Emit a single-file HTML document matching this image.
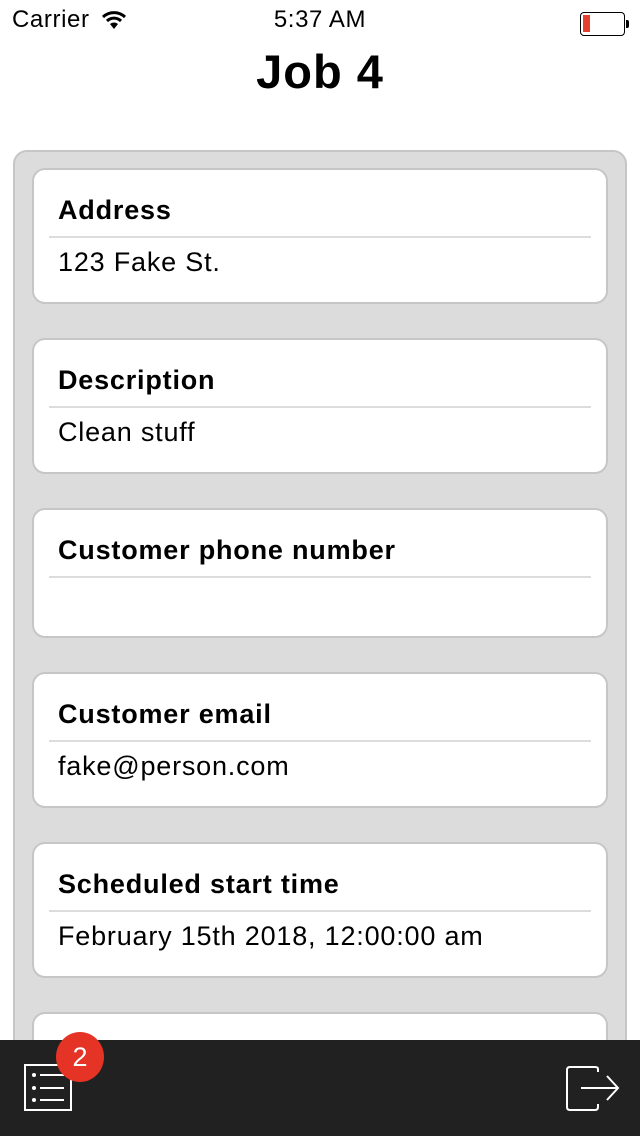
<!DOCTYPE html>
<html><head><meta charset="utf-8"><style>
*{margin:0;padding:0;box-sizing:border-box}
html,body{width:640px;height:1136px;overflow:hidden}
body{background:#fff;font-family:"Liberation Sans",sans-serif;position:relative;color:#000}
.sb{position:absolute;top:6px;font-size:24px;letter-spacing:0.6px}
.title{position:absolute;top:44px;width:100%;text-align:center;font-size:47px;font-weight:bold;letter-spacing:1px}
.wrap{position:absolute;left:13px;top:150px;width:614px;height:1000px;background:#dcdcdc;border:2px solid #c6c6c6;border-radius:14px}
.card{position:absolute;left:32px;width:576px;background:#fff;border:2px solid #c6c6c6;border-radius:13px}
.card .l{position:absolute;left:24px;top:25px;font-size:27px;font-weight:bold;letter-spacing:0.8px}
.card .sep{position:absolute;left:15px;right:15px;top:66px;height:2px;background:#dcdcdc}
.card .v{position:absolute;left:24px;top:77px;font-size:27px;letter-spacing:0.8px}
.tab{position:absolute;left:0;top:1040px;width:640px;height:96px;background:#212121}
</style></head><body>
<div class="sb" style="left:12px">Carrier</div>
<svg style="position:absolute;left:101px;top:10px" width="26" height="20" viewBox="0 0 26 20"><path d="M2 7 A16 16 0 0 1 24 7" stroke="#000" stroke-width="3" fill="none"/><path d="M6 11 A10 10 0 0 1 20 11" stroke="#000" stroke-width="3" fill="none"/><path d="M13 19 L9 14 A6 6 0 0 1 17 14 Z" fill="#000"/></svg>
<div class="sb" style="left:0;width:640px;text-align:center">5:37 AM</div>
<div style="position:absolute;left:580px;top:12px;width:45px;height:24px;border:1.5px solid #000;border-radius:4px"><div style="position:absolute;left:2px;top:2px;width:7px;height:17px;background:#e8402f"></div></div>
<div style="position:absolute;left:626px;top:20px;width:3px;height:8px;background:#000;border-radius:0 2px 2px 0"></div>
<div class="title">Job 4</div>
<div class="wrap"></div>
<div class="card" style="top:168px;height:136px"><div class="l">Address</div><div class="sep"></div><div class="v">123 Fake St.</div></div>
<div class="card" style="top:338px;height:136px"><div class="l">Description</div><div class="sep"></div><div class="v">Clean stuff</div></div>
<div class="card" style="top:508px;height:130px"><div class="l">Customer phone number</div><div class="sep"></div></div>
<div class="card" style="top:672px;height:136px"><div class="l">Customer email</div><div class="sep"></div><div class="v">fake@person.com</div></div>
<div class="card" style="top:842px;height:136px"><div class="l">Scheduled start time</div><div class="sep"></div><div class="v">February 15th 2018, 12:00:00 am</div></div>
<div class="card" style="top:1012px;height:136px"></div>
<div class="tab"></div>
<svg style="position:absolute;left:0;top:1040px" width="640" height="96" viewBox="0 0 640 96">
<rect x="25" y="25" width="46" height="45" fill="none" stroke="#fff" stroke-width="2"/>
<circle cx="34" cy="35" r="2" fill="#fff"/><circle cx="34" cy="48" r="2" fill="#fff"/><circle cx="34" cy="60" r="2" fill="#fff"/>
<path d="M40 35H64M40 48H64M40 60H64" stroke="#fff" stroke-width="2"/>
<path d="M598 32V29Q598 27 595 27H570Q567 27 567 30V67Q567 70 570 70H595Q598 70 598 67V64" stroke="#fff" stroke-width="2" fill="none"/>
<path d="M581 48H617M607 36L618 48L607 60" stroke="#fff" stroke-width="2" fill="none"/>
</svg>
<div style="position:absolute;left:56px;top:1032px;width:48px;height:50px;border-radius:50%;background:#e53425;color:#fff;font-size:27px;text-align:center;line-height:50px">2</div>
</body></html>
